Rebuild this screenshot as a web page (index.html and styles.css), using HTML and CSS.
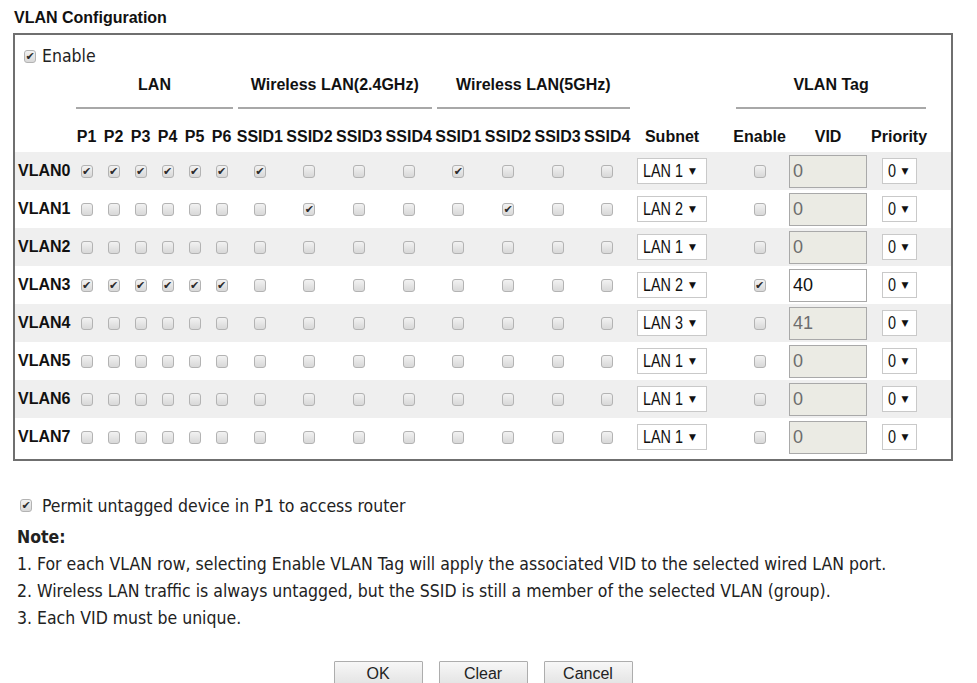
FILE: index.html
```html
<!DOCTYPE html>
<html>
<head>
<meta charset="utf-8">
<title>VLAN Configuration</title>
<link rel="stylesheet" href="styles.css">
</head>
<body>
<div class="page">
  <h1 class="title">VLAN Configuration</h1>
  <div class="box">
    <label class="enable-row"><input type="checkbox" class="cb" checked><span>Enable</span></label>
    <table class="vlan">
      <colgroup>
        <col class="c-label">
        <col class="c-p"><col class="c-p"><col class="c-p"><col class="c-p"><col class="c-p"><col class="c-p">
        <col class="c-s"><col class="c-s"><col class="c-s"><col class="c-s"><col class="c-s"><col class="c-s"><col class="c-s"><col class="c-s">
        <col class="c-subnet"><col class="c-gap"><col class="c-en"><col class="c-vid"><col class="c-pri"><col class="c-end">
      </colgroup>
      <thead>
        <tr class="groups">
          <th></th>
          <th colspan="6"><div class="grp">LAN</div></th>
          <th colspan="4"><div class="grp">Wireless LAN(2.4GHz)</div></th>
          <th colspan="4"><div class="grp">Wireless LAN(5GHz)</div></th>
          <th></th><th></th>
          <th colspan="3"><div class="grp">VLAN Tag</div></th>
          <th></th>
        </tr>
        <tr class="cols">
          <th></th>
          <th>P1</th><th>P2</th><th>P3</th><th>P4</th><th>P5</th><th>P6</th>
          <th>SSID1</th><th>SSID2</th><th>SSID3</th><th>SSID4</th>
          <th>SSID1</th><th>SSID2</th><th>SSID3</th><th>SSID4</th>
          <th>Subnet</th><th></th><th>Enable</th><th>VID</th><th>Priority</th><th></th>
        </tr>
      </thead>
      <tbody id="rows"></tbody>
    </table>
  </div>

  <label class="permit"><input type="checkbox" class="cb" checked><span>Permit untagged device in P1 to access router</span></label>
  <div class="note-title">Note:</div>
  <ol class="notes">
    <li>1. For each VLAN row, selecting Enable VLAN Tag will apply the associated VID to the selected wired LAN port.</li>
    <li>2. Wireless LAN traffic is always untagged, but the SSID is still a member of the selected VLAN (group).</li>
    <li>3. Each VID must be unique.</li>
  </ol>
  <div class="buttons">
    <button class="btn">OK</button>
    <button class="btn">Clear</button>
    <button class="btn">Cancel</button>
  </div>
</div>
<script src="app.js"></script>
</body>
</html>
```

FILE: app.js
```js
var data = [
  { p: 1, s24: 1, s5: 1, subnet: 'LAN 1', tag: 0, vid: '0' },
  { p: 0, s24: 2, s5: 2, subnet: 'LAN 2', tag: 0, vid: '0' },
  { p: 0, s24: 0, s5: 0, subnet: 'LAN 1', tag: 0, vid: '0' },
  { p: 1, s24: 0, s5: 0, subnet: 'LAN 2', tag: 1, vid: '40' },
  { p: 0, s24: 0, s5: 0, subnet: 'LAN 3', tag: 0, vid: '41' },
  { p: 0, s24: 0, s5: 0, subnet: 'LAN 1', tag: 0, vid: '0' },
  { p: 0, s24: 0, s5: 0, subnet: 'LAN 1', tag: 0, vid: '0' },
  { p: 0, s24: 0, s5: 0, subnet: 'LAN 1', tag: 0, vid: '0' }
];
function cb(on) {
  return '<td class="cc"><input type="checkbox" class="cb"' + (on ? ' checked' : '') + '></td>';
}
var html = '';
data.forEach(function (r, i) {
  html += '<tr><th class="rl">VLAN' + i + '</th>';
  for (var k = 0; k < 6; k++) html += cb(r.p);
  for (k = 1; k <= 4; k++) html += cb(r.s24 === k);
  for (k = 1; k <= 4; k++) html += cb(r.s5 === k);
  html += '<td class="cc"><span class="sel sel-subnet"><span class="val val-subnet">' + r.subnet + '</span><span class="arr">&#9660;</span></span></td>';
  html += '<td></td>';
  html += cb(r.tag);
  html += '<td class="cc"><input type="text" class="vid" value="' + r.vid + '"' + (r.tag ? '' : ' disabled') + '></td>';
  html += '<td class="cc"><span class="sel sel-pri"><span class="val val-pri">0</span><span class="arr">&#9660;</span></span></td>';
  html += '<td></td></tr>';
});
document.getElementById('rows').innerHTML = html;
```

FILE: styles.css
```css
html, body {
  margin: 0;
  padding: 0;
  background: #fff;
}
body {
  font-family: "Liberation Sans", Arial, sans-serif;
  color: #111;
}
.page {
  width: 940px;
  margin-left: 13px;
}
.title {
  margin: 8px 0 5px 1px;
  font-size: 16px;
  line-height: 20px;
  font-weight: bold;
}
.box {
  border: 2px solid #6f6f6f;
  padding-bottom: 3px;
}
.enable-row {
  display: flex;
  align-items: center;
  gap: 6px;
  padding: 11px 0 0 9px;
  height: 20px;
  font-family: "DejaVu Sans Condensed", "DejaVu Sans", sans-serif;
  font-stretch: condensed;
  font-size: 17.5px;
  color: #222;
}
.cb {
  -webkit-appearance: none;
  appearance: none;
  box-sizing: border-box;
  width: 12px;
  height: 13px;
  margin: 0;
  border: 1px solid #b3b3b3;
  border-radius: 3px;
  background: linear-gradient(#f2f2f2, #d8d8d8);
  position: relative;
  vertical-align: middle;
}
.cb:checked::after {
  content: "\2714";
  position: absolute;
  left: 0;
  top: -1px;
  width: 10px;
  text-align: center;
  font-family: "DejaVu Sans", sans-serif;
  font-size: 11px;
  line-height: 13px;
  color: #2b2b2b;
}
.vlan {
  width: 936px;
  table-layout: fixed;
  border-collapse: collapse;
  border-spacing: 0;
}
.c-label { width: 58px; }
.c-p { width: 27px; }
.c-s { width: 49.625px; }
.c-subnet { width: 80px; }
.c-gap { width: 21px; }
.c-en { width: 53px; }
.c-vid { width: 84px; }
.c-pri { width: 58px; }
.c-end { width: 23px; }

.vlan th, .vlan td {
  padding: 0;
  font-size: 16px;
  font-weight: bold;
  text-align: center;
  white-space: nowrap;
}
.groups th {
  height: 43px;
  vertical-align: top;
}
.grp {
  padding-top: 10px;
  line-height: 18px;
  padding-bottom: 13px;
  border-bottom: 2px solid #a8a8a8;
  margin: 0 2px 0 3px;
}
.cols th {
  height: 43px;
  vertical-align: bottom;
  line-height: 18px;
  padding-bottom: 6px;
  box-sizing: border-box;
}
tbody tr {
  height: 38px;
}
tbody tr:nth-child(odd) {
  background: #efefef;
}
.rl {
  text-align: left !important;
  padding-left: 3px !important;
}
.cc {
  vertical-align: middle;
}
.cc .cb {
  display: block;
  margin: 0 auto;
}
.sel {
  display: inline-flex;
  align-items: center;
  box-sizing: border-box;
  height: 26px;
  background: #fff;
  border: 1px solid #c9c9c9;
  font-family: "Liberation Sans", Arial, sans-serif;
  font-weight: normal;
  font-size: 18px;
  color: #111;
  padding-left: 5px;
  vertical-align: middle;
  overflow: hidden;
}
.val {
  display: inline-block;
  transform: scaleX(0.8);
  transform-origin: left center;
}
.val-subnet { margin-right: -10px; }
.val-pri { margin-right: -2px; }
.sel-subnet { width: 70px; }
.sel-pri { width: 35px; }
.arr {
  font-family: "DejaVu Sans", sans-serif;
  font-size: 9px;
  margin-left: 6px;
  color: #111;
}
.vid {
  box-sizing: border-box;
  width: 78px;
  height: 33px;
  padding: 0 0 0 3px;
  border: 1px solid #a9a9a9;
  background: #fff;
  font-family: "Liberation Sans", Arial, sans-serif;
  font-size: 18px;
  color: #111;
  display: block;
  margin: 0 auto;
}
.vid:disabled {
  background: #ebebe4;
  color: #6d6d6d;
}
.permit {
  display: flex;
  align-items: center;
  gap: 10px;
  margin-top: 31px;
  padding-left: 7px;
  height: 27px;
  font-family: "DejaVu Sans Condensed", "DejaVu Sans", sans-serif;
  font-stretch: condensed;
  font-size: 17.5px;
  color: #222;
}
.note-title {
  margin-top: 5px;
  padding-left: 4px;
  line-height: 27px;
  font-family: "DejaVu Sans Condensed", "DejaVu Sans", sans-serif;
  font-stretch: condensed;
  font-weight: bold;
  font-size: 17.5px;
  color: #222;
}
.notes {
  list-style: none;
  margin: 0;
  padding: 0 0 0 4px;
  font-family: "DejaVu Sans Condensed", "DejaVu Sans", sans-serif;
  font-stretch: condensed;
  font-size: 17.5px;
  line-height: 27px;
  color: #222;
}
.buttons {
  display: flex;
  justify-content: center;
  gap: 16px;
  margin-top: 29px;
}
.btn {
  box-sizing: border-box;
  width: 89px;
  height: 26px;
  border: 1px solid #adadad;
  border-radius: 1px;
  background: linear-gradient(#f7f7f7, #e2e2e2);
  font-family: "Liberation Sans", Arial, sans-serif;
  font-size: 16px;
  line-height: 24px;
  color: #222;
  padding: 0;
}
```
